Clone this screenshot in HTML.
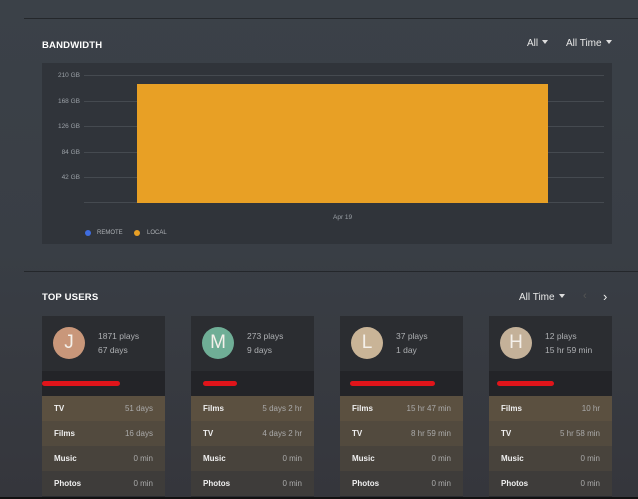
<!DOCTYPE html>
<html><head><style>
*{margin:0;padding:0;box-sizing:border-box}
body{width:638px;height:499px;overflow:hidden;position:relative;font-family:"Liberation Sans",sans-serif;background:linear-gradient(180deg,#3b4148 0%,#393e45 50%,#35363c 100%);color:#fff}
.abs{position:absolute}
.line{position:absolute;left:24px;right:0;height:1px;background:#24272b}
h2{position:absolute;font-size:9.5px;font-weight:bold;color:#fff;letter-spacing:.2px}
.dd{position:absolute;font-size:10px;color:#e8e8e8}
.dd:after{content:"";display:inline-block;margin-left:4px;vertical-align:2px;border-left:3px solid transparent;border-right:3px solid transparent;border-top:4px solid #ddd}
.chart{left:42px;top:63px;width:570px;height:181px;background:#30343a}
.gl{position:absolute;height:1px;background:#454a50}
.yl{position:absolute;width:38px;text-align:right;font-size:6.5px;color:#9aa0a6;left:42px}
.card{position:absolute;top:316px;width:123px;height:181px;background:#2b2d31}
.av{position:absolute;left:11px;top:11px;width:32px;height:32px;border-radius:50%;color:#f4f0ea;font-size:19px;text-align:center;line-height:32px}
.st{position:absolute;left:56px;font-size:8.5px;color:#aeb0b3}
.nm{position:absolute;left:0;top:55px;width:123px;height:25px;background:#232428}
.red{position:absolute;left:0;top:10px;height:5px;background:#e0141a;border-radius:3px}
.row{position:absolute;left:0;width:123px;height:25px;font-size:8px;font-weight:bold;color:#f0f0f0;padding:0 12px;line-height:25px}
.row span{float:right;font-weight:normal;color:#aaa}
.bot{position:absolute;left:0;right:0;top:497px;height:2px;background:#111}
</style></head><body>
<div class="line" style="top:18px"></div>
<h2 style="left:42px;top:40px">BANDWIDTH</h2>
<div class="dd" style="left:527px;top:38px">All</div>
<div class="dd" style="left:566px;top:38px">All Time</div>
<div class="abs chart"></div>
<div class="gl" style="left:84px;width:520px;top:75px"></div>
<div class="gl" style="left:84px;width:520px;top:101px"></div>
<div class="gl" style="left:84px;width:520px;top:126px"></div>
<div class="gl" style="left:84px;width:520px;top:152px"></div>
<div class="gl" style="left:84px;width:520px;top:177px"></div>
<div class="gl" style="left:84px;width:520px;top:202px"></div>
<div class="yl" style="top:72px">210 GB</div>
<div class="yl" style="top:98px">168 GB</div>
<div class="yl" style="top:123px">126 GB</div>
<div class="yl" style="top:149px">84 GB</div>
<div class="yl" style="top:174px">42 GB</div>
<div class="abs" style="left:137px;top:84px;width:411px;height:119px;background:#e8a025"></div>
<div class="abs" style="left:333px;top:214px;font-size:6.5px;color:#9aa0a6">Apr 19</div>
<div class="abs" style="left:85px;top:230px;width:6px;height:6px;border-radius:50%;background:#3f6de0"></div>
<div class="abs" style="left:97px;top:230px;font-size:6px;color:#aeb2b6">REMOTE</div>
<div class="abs" style="left:134px;top:230px;width:6px;height:6px;border-radius:50%;background:#e8a025"></div>
<div class="abs" style="left:147px;top:230px;font-size:6px;color:#aeb2b6">LOCAL</div>
<div class="line" style="top:271px"></div>
<h2 style="left:42px;top:292px">TOP USERS</h2>
<div class="dd" style="left:519px;top:292px">All Time</div>
<div class="abs" style="left:583px;top:290px;font-size:11px;color:#555">‹</div>
<div class="abs" style="left:603px;top:289px;font-size:13px;color:#eee">›</div>

<div class="card" style="left:42px"><div class="av" style="background:#c9977a">J</div><div class="st" style="top:15px">1871 plays</div><div class="st" style="top:29px">67 days</div><div class="nm"><div class="red" style="width:78px"></div></div>
<div class="row" style="top:80px;background:#5b5040">TV<span>51 days</span></div><div class="row" style="top:105px;background:#524a3e">Films<span>16 days</span></div><div class="row" style="top:130px;background:#48433c">Music<span>0 min</span></div><div class="row" style="top:155px;background:#3e3c3a">Photos<span>0 min</span></div></div>

<div class="card" style="left:191px"><div class="av" style="background:#6fae96">M</div><div class="st" style="top:15px">273 plays</div><div class="st" style="top:29px">9 days</div><div class="nm"><div class="red" style="left:12px;width:34px"></div></div>
<div class="row" style="top:80px;background:#5b5040">Films<span>5 days 2 hr</span></div><div class="row" style="top:105px;background:#524a3e">TV<span>4 days 2 hr</span></div><div class="row" style="top:130px;background:#48433c">Music<span>0 min</span></div><div class="row" style="top:155px;background:#3e3c3a">Photos<span>0 min</span></div></div>

<div class="card" style="left:340px"><div class="av" style="background:#c9b497">L</div><div class="st" style="top:15px">37 plays</div><div class="st" style="top:29px">1 day</div><div class="nm"><div class="red" style="left:10px;width:85px"></div></div>
<div class="row" style="top:80px;background:#5b5040">Films<span>15 hr 47 min</span></div><div class="row" style="top:105px;background:#524a3e">TV<span>8 hr 59 min</span></div><div class="row" style="top:130px;background:#48433c">Music<span>0 min</span></div><div class="row" style="top:155px;background:#3e3c3a">Photos<span>0 min</span></div></div>

<div class="card" style="left:489px"><div class="av" style="background:#c4b199">H</div><div class="st" style="top:15px">12 plays</div><div class="st" style="top:29px">15 hr 59 min</div><div class="nm"><div class="red" style="left:8px;width:57px"></div></div>
<div class="row" style="top:80px;background:#5b5040">Films<span>10 hr</span></div><div class="row" style="top:105px;background:#524a3e">TV<span>5 hr 58 min</span></div><div class="row" style="top:130px;background:#48433c">Music<span>0 min</span></div><div class="row" style="top:155px;background:#3e3c3a">Photos<span>0 min</span></div></div>
<div class="bot"></div>
</body></html>
